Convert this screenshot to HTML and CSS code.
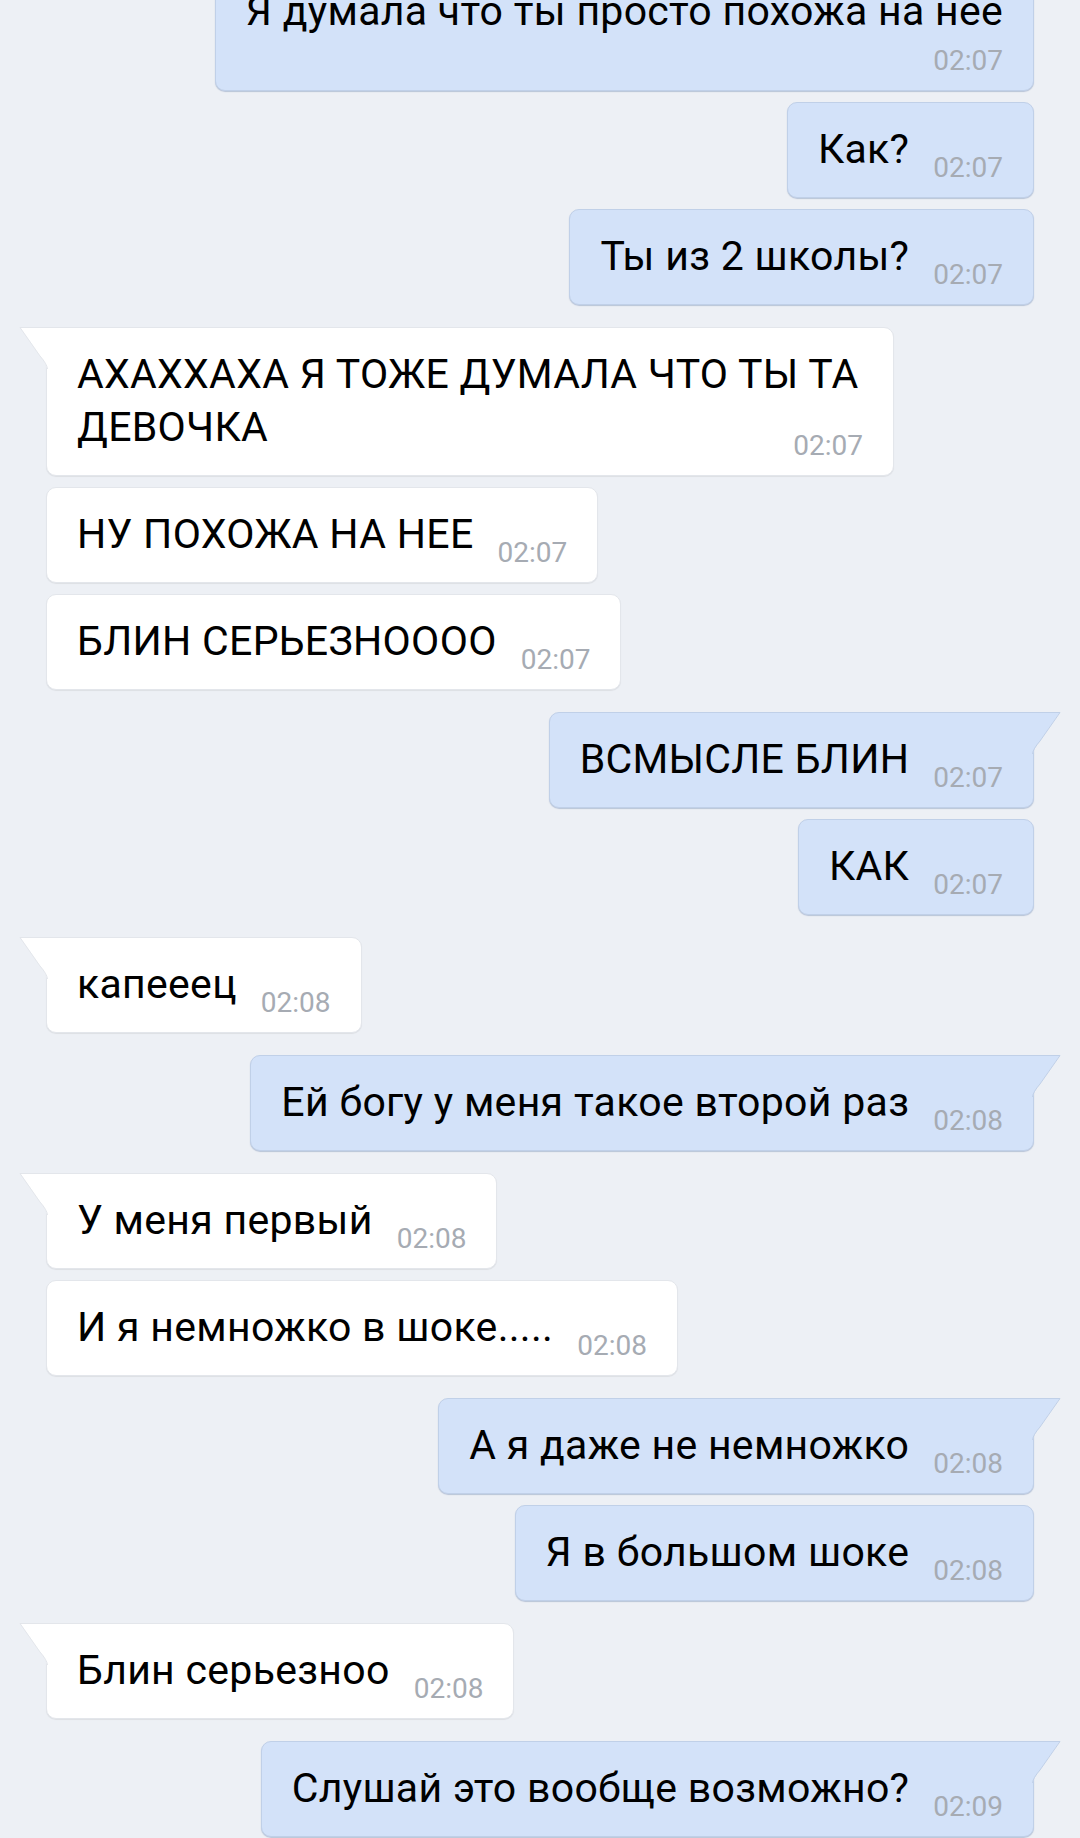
FILE: index.html
```html
<!DOCTYPE html>
<html lang="ru">
<head>
    <meta charset="UTF-8">
    <meta name="viewport" content="width=device-width, initial-scale=1.0">
    <title>Диалог</title>
    <link rel="stylesheet" href="styles.css">
</head>
<body>
    <svg class="defs" width="0" height="0">
        <symbol id="tail" viewBox="0 0 29 42">
            <path d="M29 0 H1 L21 29 Q28 37 28 42 H29 Z" class="tail-fill"/>
            <path d="M29 0.5 H1 L21 29 Q28 37 28.5 42" class="tail-line"/>
        </symbol>
    </svg>

    <div class="chat">
        <div class="row out cut">
            <div class="bubble long">
                <span class="text">Я думала что ты просто похожа на нее</span>
                <span class="time">02:07</span>
            </div>
        </div>
        <div class="row out">
            <div class="bubble"><span class="text">Как?</span><span class="time">02:07</span></div>
        </div>
        <div class="row out">
            <div class="bubble"><span class="text">Ты из 2 школы?</span><span class="time">02:07</span></div>
        </div>

        <div class="row in first">
            <div class="bubble tailed">
                <svg class="tail"><use href="#tail"/></svg>
                <span class="text">АХАХХАХА Я ТОЖЕ ДУМАЛА ЧТО ТЫ ТА ДЕВОЧКА</span><span class="time">02:07</span>
            </div>
        </div>
        <div class="row in">
            <div class="bubble"><span class="text">НУ ПОХОЖА НА НЕЕ</span><span class="time">02:07</span></div>
        </div>
        <div class="row in">
            <div class="bubble"><span class="text">БЛИН СЕРЬЕЗНОООО</span><span class="time">02:07</span></div>
        </div>

        <div class="row out first">
            <div class="bubble tailed">
                <svg class="tail"><use href="#tail"/></svg>
                <span class="text">ВСМЫСЛЕ БЛИН</span><span class="time">02:07</span>
            </div>
        </div>
        <div class="row out">
            <div class="bubble"><span class="text">КАК</span><span class="time">02:07</span></div>
        </div>

        <div class="row in first">
            <div class="bubble tailed">
                <svg class="tail"><use href="#tail"/></svg>
                <span class="text">капееец</span><span class="time">02:08</span>
            </div>
        </div>

        <div class="row out first">
            <div class="bubble tailed">
                <svg class="tail"><use href="#tail"/></svg>
                <span class="text">Ей богу у меня такое второй раз</span><span class="time">02:08</span>
            </div>
        </div>

        <div class="row in first">
            <div class="bubble tailed">
                <svg class="tail"><use href="#tail"/></svg>
                <span class="text">У меня первый</span><span class="time">02:08</span>
            </div>
        </div>
        <div class="row in">
            <div class="bubble"><span class="text">И я немножко в шоке.....</span><span class="time">02:08</span></div>
        </div>

        <div class="row out first">
            <div class="bubble tailed">
                <svg class="tail"><use href="#tail"/></svg>
                <span class="text">А я даже не немножко</span><span class="time">02:08</span>
            </div>
        </div>
        <div class="row out">
            <div class="bubble"><span class="text">Я в большом шоке</span><span class="time">02:08</span></div>
        </div>

        <div class="row in first">
            <div class="bubble tailed">
                <svg class="tail"><use href="#tail"/></svg>
                <span class="text">Блин серьезноо</span><span class="time">02:08</span>
            </div>
        </div>

        <div class="row out first">
            <div class="bubble tailed">
                <svg class="tail"><use href="#tail"/></svg>
                <span class="text">Слушай это вообще возможно?</span><span class="time">02:09</span>
            </div>
        </div>
    </div>
</body>
</html>
```

FILE: styles.css
```css
html, body {
    height: 100%;
}

body {
    margin: 0;
    background-color: #edf0f5;
    font-family: Roboto, "Noto Sans", Arial, sans-serif;
    color: #000;
    overflow: hidden;
}

.defs {
    position: absolute;
}

.chat {
    display: flex;
    flex-direction: column;
    gap: 11px;
    padding: 0 46px;
}

.row {
    display: flex;
}

.row.out {
    justify-content: flex-end;
}

.row.in {
    justify-content: flex-start;
}

/* new sender group starts a bit lower */
.row.first {
    margin-top: 11px;
}

/* first message is scrolled half out of view */
.row.cut {
    margin-top: -36px;
}

.bubble {
    position: relative;
    display: inline-block;
    box-sizing: border-box;
    max-width: 848px;
    padding: 20px 30px 16px 30px;
    border: 1px solid;
    border-radius: 10px;
    font-size: 41px;
    line-height: 53px;
    letter-spacing: 0.3px;
}

.out .bubble {
    background-color: #d3e2f9;
    border-color: #c0d0e8;
    box-shadow: 0 1px 1px rgba(90, 115, 160, 0.35);
    --tail-fill: #d3e2f9;
    --tail-line: #c0d0e8;
}

.in .bubble {
    background-color: #fff;
    border-color: #e3e6eb;
    box-shadow: 0 1px 1px rgba(0, 0, 0, 0.07);
    --tail-fill: #fff;
    --tail-line: #e3e6eb;
}

.time {
    float: right;
    margin: 32px 0 0 24px;
    font-size: 28px;
    line-height: 26px;
    letter-spacing: 0;
    color: #a6abb3;
}

.long .text {
    display: block;
}

.long .time {
    float: none;
    display: block;
    text-align: right;
    margin: 10px 0 0 0;
}

/* speech tail on first message of a group */
.in .bubble.tailed {
    border-top-left-radius: 0;
}

.out .bubble.tailed {
    border-top-right-radius: 0;
}

.tail {
    position: absolute;
    top: -1px;
    width: 29px;
    height: 42px;
}

.in .tail {
    left: -28px;
}

.out .tail {
    right: -28px;
    transform: scaleX(-1);
}

.tail-fill {
    fill: var(--tail-fill);
}

.tail-line {
    fill: none;
    stroke: var(--tail-line);
    stroke-width: 1;
}
```
